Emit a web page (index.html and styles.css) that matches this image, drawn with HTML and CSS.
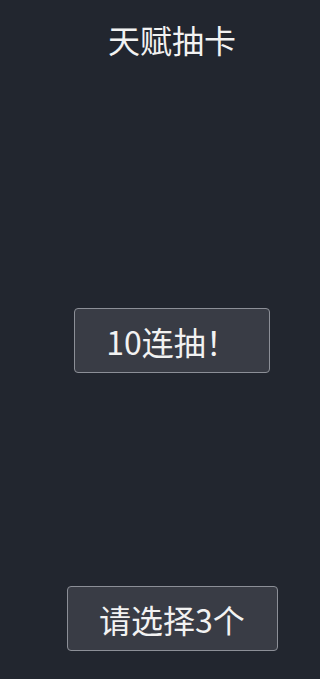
FILE: index.html
```html
<!DOCTYPE html>
<html lang="zh">
<head>
<meta charset="utf-8">
<title>天赋抽卡</title>
<link rel="stylesheet" href="styles.css">
</head>
<body>
<main class="page">
  <h1 class="title">天赋抽卡</h1>
  <button class="btn btn-draw">10连抽！</button>
  <button class="btn btn-pick">请选择3个</button>
</main>
</body>
</html>
```
FILE: styles.css
```css
html, body {
  margin: 0;
  padding: 0;
  background: #22262f;
  height: 100%;
}
.page {
  display: flex;
  flex-direction: column;
  align-items: center;
  padding-left: 24px;
  min-height: 679px;
  box-sizing: border-box;
  font-family: "Noto Sans CJK SC", "Noto Sans", sans-serif;
  color: #f2f2f2;
}
.title {
  margin: 19px 0 0;
  font-size: 32px;
  line-height: 40px;
  height: 40px;
  font-weight: 400;
}
.btn {
  display: flex;
  align-items: center;
  justify-content: center;
  box-sizing: border-box;
  height: 65px;
  background: #393c45;
  border: 1px solid #8c8f97;
  border-radius: 4px;
  color: #f2f2f2;
  font-family: inherit;
  font-size: 32px;
  line-height: 1;
  padding: 0;
}
.btn-draw {
  width: 196px;
  margin-top: 249px;
}
.btn-pick {
  width: 211px;
  margin-top: 213px;
}
```
